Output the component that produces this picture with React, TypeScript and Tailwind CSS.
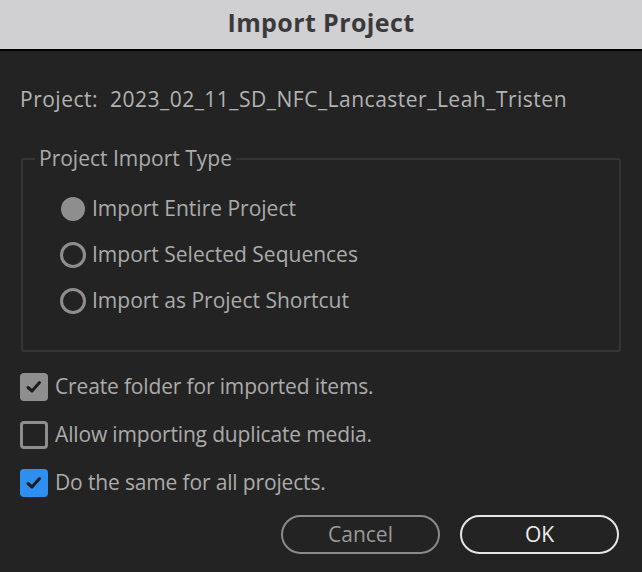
import React from "react";

function Radio({ checked, label }: { checked?: boolean; label: string }) {
  return (
    <div className="flex items-center h-[26px]">
      <span className="w-[27px] h-[26px] flex items-center justify-center shrink-0">
        {checked ? (
          <span className="w-[24px] h-[24px] rounded-full bg-[#8e8e8e]" />
        ) : (
          <span className="w-[26px] h-[26px] rounded-full border-[3px] border-[#8e8e8e]" />
        )}
      </span>
      <span className="ml-[6px]">{label}</span>
    </div>
  );
}

function Check({ state, label }: { state: "gray" | "off" | "blue"; label: string }) {
  const box =
    state === "gray"
      ? "bg-[#8e8e8e]"
      : state === "blue"
      ? "bg-[#2d8ff0]"
      : "border-[3px] border-[#8e8e8e]";
  return (
    <div className="flex items-center h-[28px]">
      <span className={`w-[28px] h-[28px] rounded-[4px] shrink-0 flex items-center justify-center ${box}`}>
        {state !== "off" && (
          <svg width="20" height="20" viewBox="0 0 20 20" fill="none">
            <path d="M4 10.5 L8 14 L15.5 5.5" stroke="#1c1c1c" strokeWidth="3" strokeLinecap="round" strokeLinejoin="round" />
          </svg>
        )}
      </span>
      <span className="ml-[7px] tracking-[-0.15px]">{label}</span>
    </div>
  );
}

export default function App() {
  return (
    <div
      className="w-[642px] h-[572px] bg-[#232323] flex flex-col text-[#ababab] text-[21px]"
      style={{ fontFamily: '"Open Sans", sans-serif' }}
    >
      {/* Title bar */}
      <div className="h-[51px] bg-[#d0cfd2] border-b-2 border-black flex items-center justify-center shrink-0 pb-[6px]">
        <span className="text-[25px] font-bold text-[#3a3a3c] tracking-[0.4px] leading-[30px]">Import Project</span>
      </div>

      <div className="px-[20px] pt-[34px] flex flex-col">
        <div className="leading-[28px] text-[#b3b3b3] tracking-[0.5px]">Project:&nbsp; 2023_02_11_SD_NFC_Lancaster_Leah_Tristen</div>

        {/* Import type group */}
        <div className="relative mt-[45px] mx-[1px] h-[194px] border-2 border-[#353535] rounded-[3px]">
          <span className="absolute left-[12px] top-[-16px] px-[4px] bg-[#232323] leading-[28px]">Project Import Type</span>
          <div className="flex flex-col gap-[20px] pl-[36px] pt-[36px]">
            <Radio checked label="Import Entire Project" />
            <Radio label="Import Selected Sequences" />
            <Radio label="Import as Project Shortcut" />
          </div>
        </div>

        <div className="flex flex-col gap-[20px] mt-[21px]">
          <Check state="gray" label="Create folder for imported items." />
          <Check state="off" label="Allow importing duplicate media." />
          <Check state="blue" label="Do the same for all projects." />
        </div>

        <div className="flex justify-end gap-[20px] mt-[18px] pr-[3px]">
          <button className="w-[159px] h-[39px] rounded-full border-2 border-[#8a8a8a] text-[#9a9a9a]">Cancel</button>
          <button className="w-[159px] h-[39px] rounded-full border-2 border-[#e6e6e6] text-[#ececec]">OK</button>
        </div>
      </div>
    </div>
  );
}
